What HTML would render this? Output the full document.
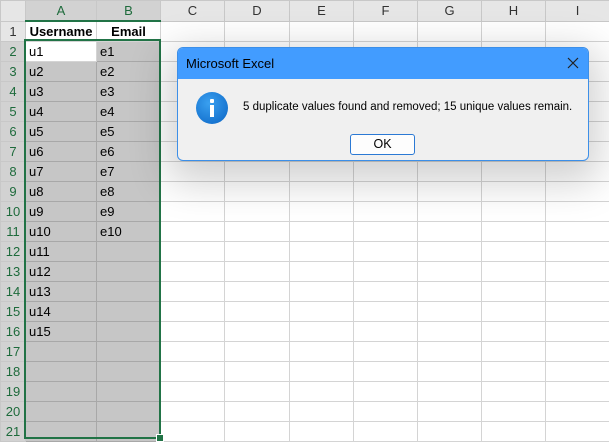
<!DOCTYPE html>
<html><head><style>
body{margin:0;width:609px;height:440px;overflow:hidden;background:#fff;font-family:"Liberation Sans",sans-serif;position:relative}
table{border-collapse:collapse;table-layout:fixed;position:absolute;left:0;top:0;width:609px}
td{height:19px;border:1px solid #d4d4d4;padding:0 3px;font-size:13px;color:#000;white-space:nowrap;overflow:hidden;line-height:19px}
tr.h td{background:#e6e6e6;border-color:#c8c8c8;text-align:center;color:#333}
td.r{background:#e6e6e6;border-color:#c8c8c8;text-align:center;color:#333;padding:0}
tr.h td.sel{background:#d2d2d2;color:#1e6b3c;border-bottom:2px solid #217346}
td.r.sel{background:#d2d2d2;color:#1e6b3c}
td.s{background:#c6c6c6;border-color:#a8a8a8}
td.w{background:#fff}
.b{font-weight:bold;text-align:center;padding:0}
#selb{position:absolute;left:24px;top:39px;width:133px;height:396px;border:2px solid #217346}
#h{position:absolute;left:156px;top:434px;width:6px;height:6px;background:#217346;border:1px solid #fff}
#dlg{position:absolute;left:177px;top:47px;width:410px;height:112px;background:#f0f0f0;border:1px solid #3c8fe8;border-radius:6px;box-shadow:0 12px 40px 10px rgba(0,0,0,.18);overflow:hidden}
#tb{height:31px;background:#429cff;font-size:13px;line-height:31px;padding-left:8px;color:#000}
#x{position:absolute;right:8px;top:8px}
#ic{position:absolute;left:18px;top:44px;width:32px;height:32px;border-radius:50%;background:radial-gradient(circle at 40% 35%,#3aa0f0,#0a64c4)}
#ic:before{content:"";position:absolute;left:14px;top:7px;width:4px;height:4px;background:#fff;border-radius:1px}
#ic:after{content:"";position:absolute;left:14px;top:13px;width:4px;height:12px;background:#fff}
#msg{position:absolute;left:65px;top:53px;font-size:11.5px;color:#000;white-space:nowrap}
#ok{position:absolute;left:172px;top:86px;width:63px;height:19px;border:1px solid #2b79d4;border-radius:3px;background:#fdfdfd;font-size:12.5px;text-align:center;line-height:19px}
</style></head><body>
<table>
<colgroup><col style="width:25px"><col style="width:71px"><col style="width:64px"><col style="width:64px"><col style="width:65px"><col style="width:64px"><col style="width:64px"><col style="width:64px"><col style="width:64px"><col style="width:64px"></colgroup>
<tr class="h"><td></td><td class="sel">A</td><td class="sel">B</td><td>C</td><td>D</td><td>E</td><td>F</td><td>G</td><td>H</td><td>I</td></tr>
<tr><td class="r">1</td><td class="b">Username</td><td class="b">Email</td><td></td><td></td><td></td><td></td><td></td><td></td><td></td></tr>
<tr><td class="r sel">2</td><td class="w">u1</td><td class="s">e1</td><td></td><td></td><td></td><td></td><td></td><td></td><td></td></tr>
<tr><td class="r sel">3</td><td class="s">u2</td><td class="s">e2</td><td></td><td></td><td></td><td></td><td></td><td></td><td></td></tr>
<tr><td class="r sel">4</td><td class="s">u3</td><td class="s">e3</td><td></td><td></td><td></td><td></td><td></td><td></td><td></td></tr>
<tr><td class="r sel">5</td><td class="s">u4</td><td class="s">e4</td><td></td><td></td><td></td><td></td><td></td><td></td><td></td></tr>
<tr><td class="r sel">6</td><td class="s">u5</td><td class="s">e5</td><td></td><td></td><td></td><td></td><td></td><td></td><td></td></tr>
<tr><td class="r sel">7</td><td class="s">u6</td><td class="s">e6</td><td></td><td></td><td></td><td></td><td></td><td></td><td></td></tr>
<tr><td class="r sel">8</td><td class="s">u7</td><td class="s">e7</td><td></td><td></td><td></td><td></td><td></td><td></td><td></td></tr>
<tr><td class="r sel">9</td><td class="s">u8</td><td class="s">e8</td><td></td><td></td><td></td><td></td><td></td><td></td><td></td></tr>
<tr><td class="r sel">10</td><td class="s">u9</td><td class="s">e9</td><td></td><td></td><td></td><td></td><td></td><td></td><td></td></tr>
<tr><td class="r sel">11</td><td class="s">u10</td><td class="s">e10</td><td></td><td></td><td></td><td></td><td></td><td></td><td></td></tr>
<tr><td class="r sel">12</td><td class="s">u11</td><td class="s"></td><td></td><td></td><td></td><td></td><td></td><td></td><td></td></tr>
<tr><td class="r sel">13</td><td class="s">u12</td><td class="s"></td><td></td><td></td><td></td><td></td><td></td><td></td><td></td></tr>
<tr><td class="r sel">14</td><td class="s">u13</td><td class="s"></td><td></td><td></td><td></td><td></td><td></td><td></td><td></td></tr>
<tr><td class="r sel">15</td><td class="s">u14</td><td class="s"></td><td></td><td></td><td></td><td></td><td></td><td></td><td></td></tr>
<tr><td class="r sel">16</td><td class="s">u15</td><td class="s"></td><td></td><td></td><td></td><td></td><td></td><td></td><td></td></tr>
<tr><td class="r sel">17</td><td class="s"></td><td class="s"></td><td></td><td></td><td></td><td></td><td></td><td></td><td></td></tr>
<tr><td class="r sel">18</td><td class="s"></td><td class="s"></td><td></td><td></td><td></td><td></td><td></td><td></td><td></td></tr>
<tr><td class="r sel">19</td><td class="s"></td><td class="s"></td><td></td><td></td><td></td><td></td><td></td><td></td><td></td></tr>
<tr><td class="r sel">20</td><td class="s"></td><td class="s"></td><td></td><td></td><td></td><td></td><td></td><td></td><td></td></tr>
<tr><td class="r sel">21</td><td class="s"></td><td class="s"></td><td></td><td></td><td></td><td></td><td></td><td></td><td></td></tr>
</table>
<div id="selb"></div><div id="h"></div>
<div id="dlg">
<div id="tb">Microsoft Excel</div>
<svg id="x" width="14" height="14" viewBox="0 0 14 14"><path d="M2 2L12 12M12 2L2 12" stroke="#222" stroke-width="1.2"/></svg>
<div id="ic"></div>
<div id="msg">5 duplicate values found and removed; 15 unique values remain.</div>
<div id="ok">OK</div>
</div>
</body></html>
